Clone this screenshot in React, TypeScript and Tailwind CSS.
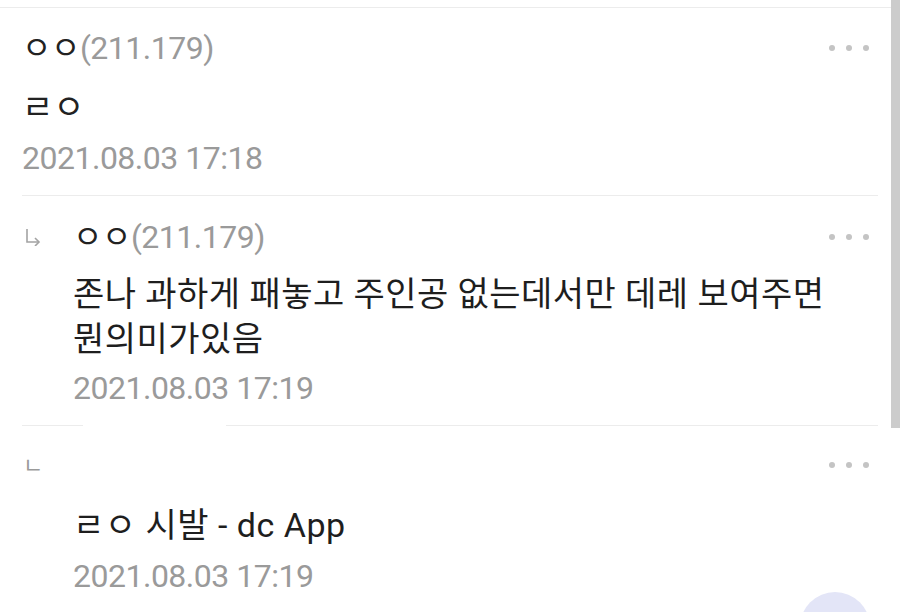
import React from "react";

const font = "font-['Roboto','Noto_Sans_CJK_KR',sans-serif]";

function Dots() {
  return (
    <div className="flex items-center gap-[11px] mr-[9px]">
      <span className="w-[6px] h-[6px] rounded-full bg-[#c4c4c4]" />
      <span className="w-[6px] h-[6px] rounded-full bg-[#c4c4c4]" />
      <span className="w-[6px] h-[6px] rounded-full bg-[#c4c4c4]" />
    </div>
  );
}

function Name({ ip }: { ip: string }) {
  return (
    <div className="text-[32px] leading-none tracking-[-0.5px]">
      <span className="text-[#222]">ㅇㅇ</span>
      <span className="text-[#9a9a9a]">({ip})</span>
    </div>
  );
}

function ReplyArrow() {
  return (
    <svg width="18" height="18" viewBox="0 0 18 18" fill="none" stroke="#a3a3a3" strokeWidth="1.6">
      <path d="M3 1v13h12" />
      <path d="M11 10l4 4-4 4" />
    </svg>
  );
}

export default function App() {
  return (
    <div className={`relative w-[900px] h-[612px] overflow-hidden bg-white ${font}`}>
      <div className="flex">
        <div className="flex-1 pt-[7px]">
          <div className="h-px bg-[#ececec]" />

          {/* comment */}
          <div className="pt-[15px] pl-[22px] pr-[13px]">
            <div className="h-[50px] flex items-center justify-between">
              <Name ip="211.179" />
              <Dots />
            </div>
            <div className="mt-[9px] leading-[50px] text-[34px] text-[#222]">ㄹㅇ</div>
            <div className="leading-[52px] text-[32px] text-[#9a9a9a] tracking-[-0.5px]">2021.08.03 17:18</div>
            <div className="mt-[11px] h-px bg-[#ececec]" />
          </div>

          {/* reply */}
          <div className="pt-[16px] pl-[22px] pr-[13px]">
            <div className="h-[50px] flex items-center justify-between">
              <div className="flex items-center">
                <span className="w-[51px] pl-[2px] flex items-center">
                  <ReplyArrow />
                </span>
                <Name ip="211.179" />
              </div>
              <Dots />
            </div>
            <div className="mt-[10px] pl-[51px] leading-[45px] text-[34px] text-[#1e1e1e] tracking-[0.45px]">
              존나 과하게 패놓고 주인공 없는데서만 데레 보여주면
              <br />
              뭔의미가있음
            </div>
            <div className="pl-[51px] leading-[52px] text-[32px] text-[#9a9a9a] tracking-[-0.5px]">2021.08.03 17:19</div>
            <div className="mt-[11px] flex">
              <div className="w-[61px] h-px bg-[#ececec]" />
              <div className="ml-[143px] flex-1 h-px bg-[#ececec]" />
            </div>
          </div>

          {/* reply 2 */}
          <div className="pt-[14px] pl-[22px] pr-[13px]">
            <div className="h-[50px] flex items-center justify-between">
              <span className="pl-[1px] text-[22px] text-[#9a9a9a]">ㄴ</span>
              <Dots />
            </div>
            <div className="mt-[10px] pl-[51px] leading-[50px] text-[34px] text-[#1e1e1e] tracking-[0.5px]">
              ㄹㅇ 시발 - dc App
            </div>
            <div className="pl-[51px] leading-[52px] text-[32px] text-[#9a9a9a] tracking-[-0.5px]">2021.08.03 17:19</div>
          </div>
        </div>
        <div className="w-[9px] h-[428px] bg-[#cccccc] self-start" />
      </div>

      <div className="absolute left-[800px] top-[592px] w-[70px] h-[70px] rounded-full bg-[#e3e5f7]" />
    </div>
  );
}
